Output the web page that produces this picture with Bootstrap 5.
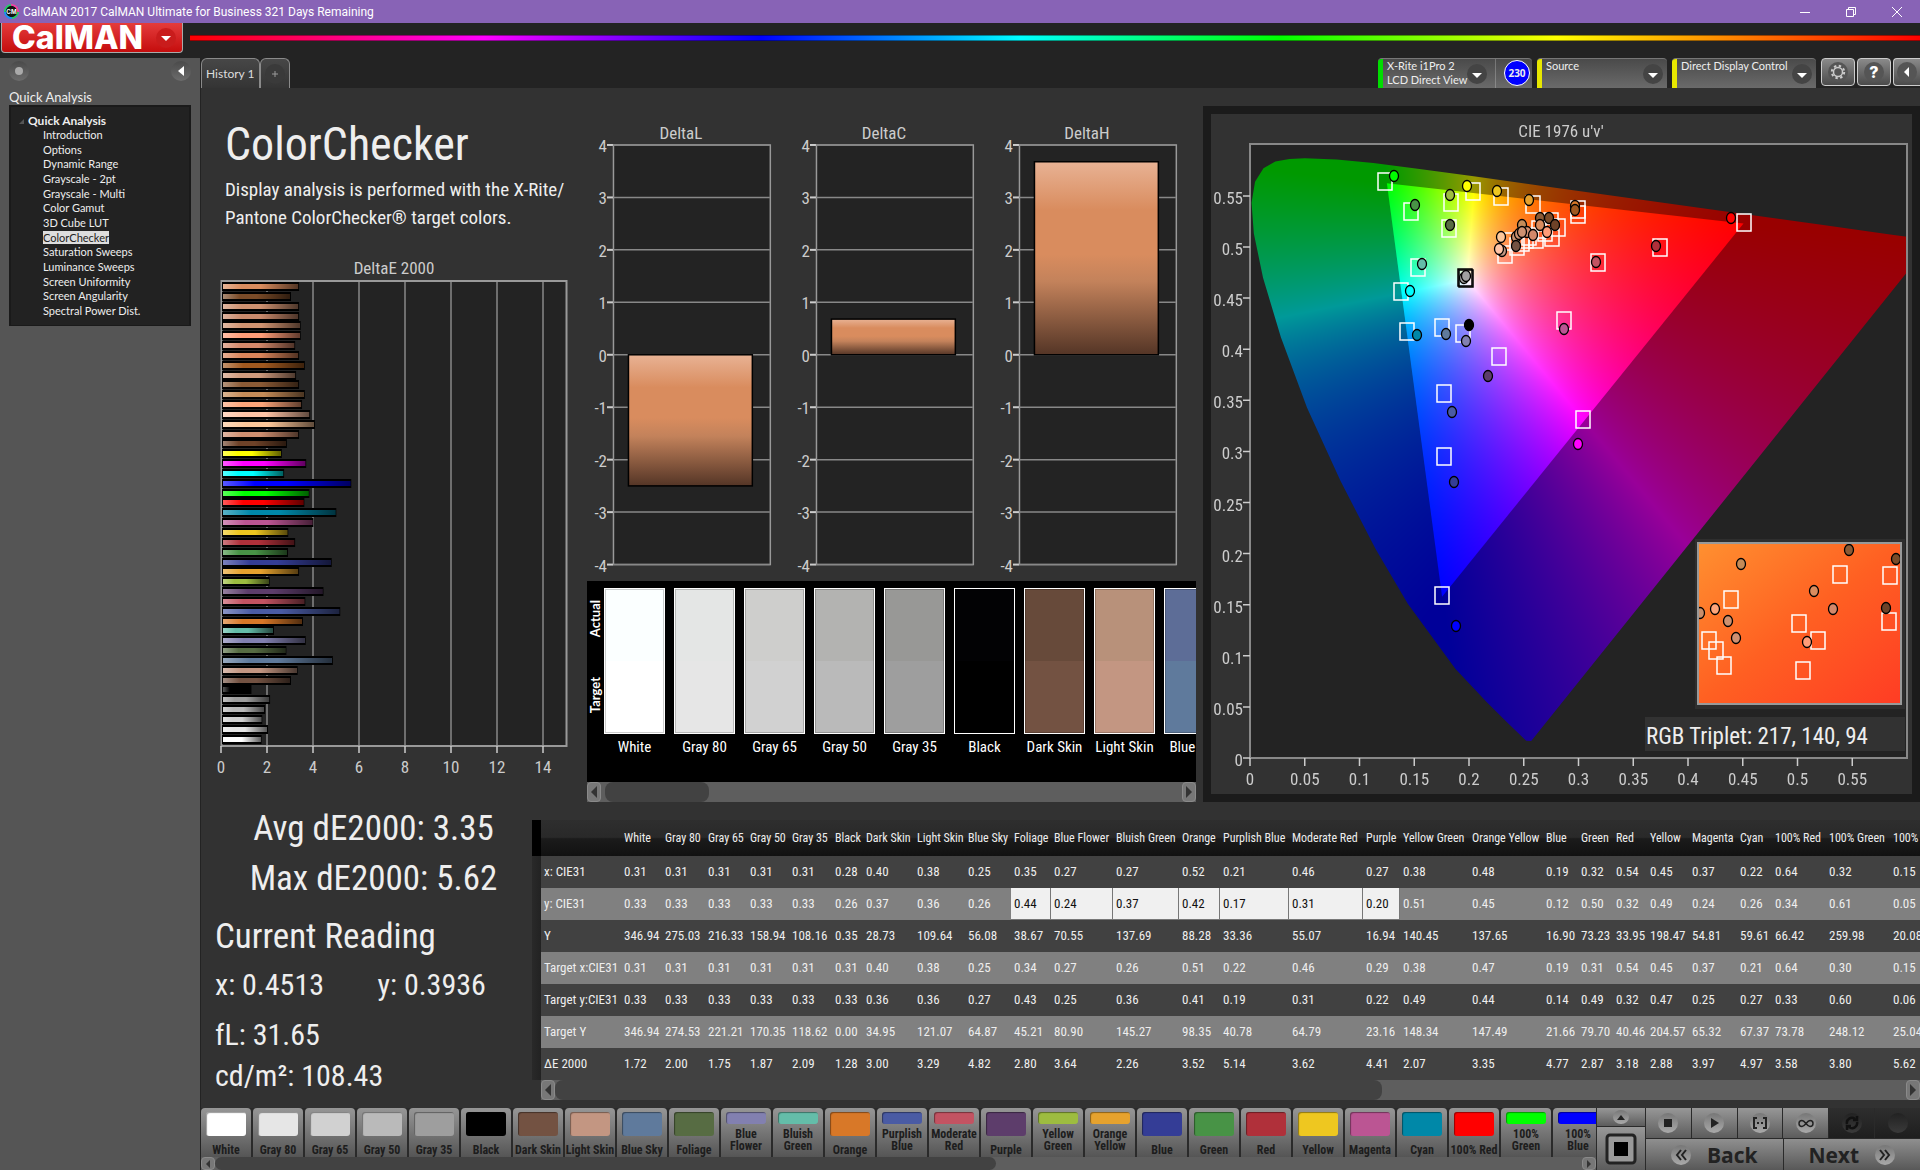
<!DOCTYPE html>
<html lang="en">
<head>
<meta charset="utf-8">
<meta name="viewport" content="width=device-width, initial-scale=1">
<title>CalMAN 2017</title>
<link href="https://cdn.jsdelivr.net/npm/bootstrap@5.3.0/dist/css/bootstrap.min.css" rel="stylesheet">
<style>
:root{--ui:Lato,"Open Sans",sans-serif;--slim:"Roboto Condensed",Lato,sans-serif}
body{background:#323232;color:#eee;font-family:var(--ui);font-size:12px;line-height:14px;overflow:hidden}
button{font-family:inherit;color:inherit;border:0;padding:0;background:none}
.titlebar{height:23px;background:#8863b6;font:12px/20px Roboto,"Open Sans",sans-serif;color:#fff}
.titlebar .win{width:46px;height:20px}
.brandrow{height:35px;background:#232323}
.brand{width:182px;height:30px;background:linear-gradient(#e43c3c,#c50d0d);border:1px solid #aaa;border-top:0;border-radius:0 0 4px 4px;margin-left:1px;padding:0 6px 0 10px}
.brand-name{font:800 32px/28px Inter,Lato,sans-serif;color:#fff}
.spectrum{height:6px;margin-top:12px;margin-left:7px;border:solid #0006;border-width:1px 0;background:linear-gradient(90deg,#f00,#f0f 17%,#00f 33%,#0ff 48%,#0f0 63%,#ff0 79%,#f00)}
.sidebar{width:201px;background:#555;border-right:1px solid #232323;padding:0 9px}
.knobs{padding-top:3px}
.knob{width:20px;height:20px;border-radius:50%;background:linear-gradient(#4a4a4a,#6c6c6c);display:grid;place-items:center}
.knob.dim{background:#3a3a3a}
.side-title{font-size:13px;line-height:16px}
.tree{background:#222;border:2px solid #1a1a1a;border-bottom-width:1px;height:221px;padding-top:7px}
.tree-head{font-size:12px;line-height:14px;font-weight:700}
.tree ul{height:190px}
.tree a{color:#eee;text-decoration:none;font-size:11px;line-height:14px}
.tree a.on{background:#ddd;color:#222}
.tabs{height:30px;background:#232323}
.tabpage{height:30px;background:linear-gradient(#474747,#343434);border:1px solid #8a8a8a;border-bottom:0;color:#ddd;font-size:12px}
.devices{gap:5px}
.device{height:30px;background:linear-gradient(#4a4a4a,#6a6a6a);border-radius:4px 4px 0 0;color:#eee;text-align:left;border-top:1px solid #777;overflow:hidden;font-size:11px}
.device .led{width:5px;background:#e8e800}
.device .led.ok{background:#0d0}
.w-meter{width:154px}.w-source{width:130px}.w-display{width:144px}
.counter{width:26px;height:26px;margin:1px 2px 0 8px;border-radius:50%;background:#00f;border:1px solid #fff;font:700 10px/24px "Open Sans",sans-serif;text-align:center}
.tools{gap:2px}
.tool{width:34px;height:28px;border:1px solid #ccc;border-radius:4px;background:linear-gradient(#8a8a8a,#4a4a4a);display:grid;place-items:center}
.tool.cut{width:27px;border-right:0;border-radius:4px 0 0 4px}
.upper{padding-top:18px}
.col-a,.col-b,.col-c{min-width:0}
.col-a{flex:376 1 0}.col-b{flex:626 1 0}.col-c{flex:717 1 0}
.lead-in{padding:10px 0 0 24px}
.page-title{font-family:var(--slim);font-size:46px;line-height:56px;color:#eee}
.intro{font-family:var(--slim);font-size:19px;line-height:28px;white-space:nowrap}
#de{margin-top:22px}
#deltas{padding-top:11px}
.delta{width:32.4%}
svg text{font-family:var(--slim);font-size:17px;fill:#ccc}
.swatches{margin:4px 7px 0 10px}
.strip{height:201px;background:#000;padding-top:7px}
.sides{width:17px;padding-top:12px;gap:40px}
#chips{gap:9px}
.chip{width:61px;flex:none}
.chip-face{height:146px;border:1px solid #fff;outline:1px solid #0003;outline-offset:-2px}
.chip-name{font-family:var(--slim);font-size:15px;line-height:22px;padding-top:2px;white-space:nowrap;color:#fff}
.updown{writing-mode:vertical-rl;transform:rotate(180deg);font-weight:700;font-size:13px;line-height:16px;color:#fff}
.rail{background:#5e5e5e;height:20px}
.rail.thin{height:13px}
.rail button{width:14px;background:#777;border:1px solid #8a8a8a;border-radius:4px;line-height:0}
.rail .thumb{background:#424242;border-radius:8px}
.t17{width:17%}.t56{width:56%}.t60{width:60%}
.cie{border:8px solid #1b1b1b}
.stats{width:331px;padding:2px 0 0 14px}
.big{font-family:var(--slim);font-size:35px;line-height:50px}
.mid{font-family:var(--slim);font-size:30px;line-height:36px}
.gap-s{margin-top:5px}.gap-l{margin-top:14px}
.results{padding-top:18px}
.results .rail{margin-left:9px}
.grid{table-layout:fixed;border-collapse:collapse;width:1410px;font-family:var(--slim);font-size:13px}
.grid th,.grid td{height:32px;padding:0 0 0 3px;font-weight:400;white-space:nowrap;color:#eee;line-height:20px}
.grid thead th{height:36px;font-size:12px;background:linear-gradient(#2e2e2e,#292929 48%,#1b1b1b 52%,#111)}
.grid tbody tr{background:#414141}
.grid tbody tr:nth-child(even){background:#808080}
.grid .edge{background:linear-gradient(90deg,#292929,#222)}
.grid thead .edge{background:#000}
.grid td.sel{background:#f0f0f0;color:#111;box-shadow:inset -1px -1px #777}
.dock{height:62px;background:#2a2a2a}
#patches{gap:2px}
.patch{width:50px;height:49px;flex:none;border-radius:4px 4px 0 0;background:linear-gradient(#969696,#555);color:#1d1d1d;font:700 12px/12px var(--slim);text-align:center}
.patch i{display:block;width:40px;height:24px;border-radius:3px;box-shadow:inset 1px 1px 1px #0006}
.patch.two i{height:12px}
.side-keys{width:50px;padding:0 1px;gap:1px}
.transport{width:274px;gap:1px}
.transport>div{gap:1px}
.transport .pad{height:30px}
.pad{background:linear-gradient(#979797,#5c5c5c);flex:1 1 0;display:grid;place-items:center}
.pad.k1{flex-grow:18}.pad.k2{flex-grow:43}
.pad.off{background:linear-gradient(#2e2e2e,#1e1e1e)}
.disc{width:20px;height:20px;border-radius:50%;background:linear-gradient(#777,#aaa);display:grid;place-items:center}
.disc.sm{width:16px;height:14px}
.off .disc{background:linear-gradient(#222,#3a3a3a)}
.nav-btn{background:linear-gradient(#8f8f8f,#585858);color:#222;font:700 21px/28px "Open Sans",sans-serif;flex:1 1 0}
</style>
</head>
<body class="d-flex flex-column vh-100">
<header class="titlebar d-flex flex-shrink-0 align-items-center">
  <svg class="ms-1 me-1" width="15" height="17" viewBox="0 0 17 17"><circle cx="8.500" cy="8.500" r="7.500" fill="#111" stroke="#2c6" stroke-width="2"/><path d="M8 1a7.500 7.500 0 0 1 8 8" stroke="#f3a" stroke-width="2" fill="none"/><path d="M1 9a7.500 7.500 0 0 0 8 7" stroke="#28f" stroke-width="2" fill="none"/><text x="8.500" y="11.500" text-anchor="middle" style="font:700 7px Inter,sans-serif;fill:#fff">CM</text></svg>
  <span class="flex-grow-1">CalMAN 2017 CalMAN Ultimate for Business 321 Days Remaining</span>
  <button class="win" aria-label="Minimize"><svg width="12" height="12"><path d="M1 6.500h10" stroke="#fff"/></svg></button>
  <button class="win" aria-label="Restore"><svg width="12" height="12" fill="none" stroke="#fff"><path d="M1.500 3.500h7v7h-7zM3.500 3.500v-2h7v7h-2"/></svg></button>
  <button class="win" aria-label="Close"><svg width="12" height="12"><path d="M1 1l10 10M11 1L1 11" stroke="#fff"/></svg></button>
</header>
<div class="brandrow d-flex flex-shrink-0">
  <button class="brand d-flex align-items-center justify-content-between" aria-label="CalMAN menu"><span class="brand-name">CalMAN</span><svg width="20" height="20"><circle cx="10" cy="10" r="10" fill="#c91c1c"/><path d="M5 8h10l-5 5z" fill="#fff"/></svg></button>
  <div class="spectrum flex-grow-1"></div>
</div>
<div class="d-flex flex-grow-1">
  <aside class="sidebar flex-shrink-0">
    <div class="knobs d-flex justify-content-between mb-2">
      <button class="knob" aria-label="Pin"><svg width="8" height="8"><circle cx="4" cy="4" r="4" fill="#aaa"/></svg></button>
      <button class="knob" aria-label="Collapse"><svg width="8" height="12"><path d="M7 1v10L1 6z" fill="#fff"/></svg></button>
    </div>
    <div class="side-title">Quick Analysis</div>
    <nav class="tree">
      <div class="d-flex align-items-center ps-2"><svg width="5" height="5" class="me-1"><path d="M5 0v5H0z" fill="#555"/></svg><span class="tree-head">Quick Analysis</span></div>
      <ul class="list-unstyled d-flex flex-column justify-content-between ps-4 ms-2 mb-0">
        <li><a href="#">Introduction</a></li><li><a href="#">Options</a></li><li><a href="#">Dynamic Range</a></li><li><a href="#">Grayscale - 2pt</a></li><li><a href="#">Grayscale - Multi</a></li><li><a href="#">Color Gamut</a></li><li><a href="#">3D Cube LUT</a></li><li><a href="#" class="on">ColorChecker</a></li><li><a href="#">Saturation Sweeps</a></li><li><a href="#">Luminance Sweeps</a></li><li><a href="#">Screen Uniformity</a></li><li><a href="#">Screen Angularity</a></li><li><a href="#">Spectral Power Dist.</a></li>
      </ul>
    </nav>
  </aside>
  <main class="flex-grow-1 d-flex flex-column overflow-hidden">
    <div class="tabs d-flex flex-shrink-0">
      <button class="tabpage px-1 rounded-top">History 1</button>
      <button class="tabpage px-1 rounded-top" aria-label="Add history"><span class="knob dim"><svg width="8" height="8"><path d="M4 1v6M1 4h6" stroke="#999"/></svg></span></button>
      <div class="devices ms-auto d-flex">
        <div class="device w-meter d-flex">
          <span class="led ok"></span>
          <button class="d-flex text-start ps-1 flex-grow-1"><span>X-Rite i1Pro 2<br>LCD Direct View</span><svg class="mt-1" width="20" height="22"><ellipse cx="10" cy="11" rx="10" ry="10" fill="#444"/><path d="M5 10h10l-5 5z" fill="#fff"/></svg></button>
          <span class="vr"></span><span class="counter">230</span>
        </div>
        <button class="device w-source d-flex"><span class="led h-100"></span><span class="ps-1">Source</span><svg class="mt-1 me-1 ms-auto" width="20" height="22"><ellipse cx="10" cy="11" rx="10" ry="10" fill="#444"/><path d="M5 10h10l-5 5z" fill="#fff"/></svg></button>
        <button class="device w-display d-flex"><span class="led h-100"></span><span class="ps-1 text-nowrap">Direct Display Control</span><svg class="mt-1 me-1 ms-auto flex-shrink-0" width="20" height="22"><ellipse cx="10" cy="11" rx="10" ry="10" fill="#444"/><path d="M5 10h10l-5 5z" fill="#fff"/></svg></button>
        <div class="tools d-flex">
        <button class="tool" aria-label="Settings"><svg width="22" height="22"><circle cx="11" cy="11" r="10" fill="#555"/><circle cx="11" cy="11" r="4.500" fill="none" stroke="#ccc" stroke-width="1.500"/><circle cx="11" cy="11" r="6.200" fill="none" stroke="#ccc" stroke-width="2" stroke-dasharray="2.400 2.470"/></svg></button>
        <button class="tool" aria-label="Help"><svg width="22" height="22"><circle cx="11" cy="11" r="10" fill="#555"/><text x="11" y="17" text-anchor="middle" style="font:800 16px Inter;fill:#fff">?</text></svg></button>
        <button class="tool cut" aria-label="Hide"><svg width="22" height="22"><circle cx="11" cy="11" r="10" fill="#555"/><path d="M13 6v10l-5-5z" fill="#fff"/></svg></button>
        </div>
      </div>
    </div>
    <section class="upper d-flex flex-shrink-0">
      <div class="col-a">
        <div class="lead-in">
          <h1 class="page-title fw-normal m-0 mb-1">ColorChecker</h1>
          <p class="intro m-0">Display analysis is performed with the X-Rite/<br>Pantone ColorChecker® target colors.</p>
        </div>
        <svg id="de" class="d-block w-100" viewBox="0 0 376 530"></svg>
      </div>
      <div class="col-b">
        <div class="d-flex" id="deltas"></div>
        <div class="swatches">
          <div class="strip d-flex overflow-hidden">
            <div class="sides d-flex flex-column flex-shrink-0"><span class="updown">Actual</span><span class="updown">Target</span></div>
            <div class="d-flex overflow-hidden" id="chips"></div>
          </div>
          <div class="rail d-flex"><button aria-label="Scroll left"><svg width="8" height="12"><path d="M7 0v12L1 6z" fill="#333"/></svg></button><div class="thumb t17 ms-1 flex-shrink-0"></div><button class="ms-auto" aria-label="Scroll right"><svg width="8" height="12"><path d="M1 0v12l6-6z" fill="#333"/></svg></button></div>
        </div>
      </div>
      <div class="col-c">
        <div class="cie position-relative">
          <canvas id="gamut" class="d-block w-100" width="701" height="680"></canvas>
          <svg id="uv" class="position-absolute top-0 start-0 w-100 h-100" viewBox="0 0 701 680"></svg>
        </div>
      </div>
    </section>
    <section class="d-flex flex-grow-1">
      <div class="stats flex-shrink-0">
        <div class="big text-center">Avg dE2000: 3.35<br>Max dE2000: 5.62</div>
        <div class="big mt-2">Current Reading</div>
        <div class="mid d-flex gap-s"><span class="w-50">x: 0.4513</span><span class="ps-1">y: 0.3936</span></div>
        <div class="mid gap-l">fL: 31.65</div>
        <div class="mid gap-s">cd/m²: 108.43</div>
      </div>
      <div class="results flex-grow-1 overflow-hidden">
        <div class="overflow-hidden"><table class="grid" id="grid"></table></div>
        <div class="rail d-flex"><button aria-label="Scroll left"><svg width="8" height="12"><path d="M7 0v12L1 6z" fill="#333"/></svg></button><div class="thumb t60 flex-shrink-0"></div><button class="ms-auto" aria-label="Scroll right"><svg width="8" height="12"><path d="M1 0v12l6-6z" fill="#333"/></svg></button></div>
      </div>
    </section>
    <footer class="dock d-flex flex-shrink-0">
      <div class="flex-grow-1 overflow-hidden">
        <div class="d-flex overflow-hidden" id="patches"></div>
        <div class="rail thin d-flex"><button aria-label="Scroll left"><svg width="6" height="8"><path d="M5 0v8L1 4z" fill="#333"/></svg></button><div class="thumb t56 flex-shrink-0"></div><button class="ms-auto" aria-label="Scroll right"><svg width="6" height="8"><path d="M1 0v8l4-4z" fill="#333"/></svg></button></div>
      </div>
      <div class="side-keys d-flex flex-column flex-shrink-0">
        <button class="pad k1" aria-label="Up"><span class="disc sm"><svg width="8" height="5"><path d="M0 5l4-5 4 5z" fill="#222"/></svg></span></button>
        <button class="pad k2" aria-label="Pattern window"><svg width="32" height="32"><rect x="2" y="2" width="28" height="28" rx="3" fill="#999" stroke="#222" stroke-width="3"/><path d="M9 9h14v14H9z" fill="#000"/></svg></button>
      </div>
      <div class="transport d-flex flex-column flex-shrink-0">
        <div class="d-flex">
          <button class="pad" aria-label="Stop"><span class="disc"><svg width="8" height="8"><path d="M0 0h8v8H0z" fill="#222"/></svg></span></button>
          <button class="pad" aria-label="Play"><span class="disc"><svg width="9" height="10"><path d="M1 0v10l8-5z" fill="#222"/></svg></span></button>
          <button class="pad" aria-label="Read series"><span class="disc"><svg width="14" height="12" fill="none" stroke="#222" stroke-width="2"><path d="M4 1H1v10h3M10 1h3v10h-3"/><path d="M4 6h6" stroke-dasharray="2 2"/></svg></span></button>
          <button class="pad" aria-label="Continuous"><span class="disc"><svg width="16" height="9" fill="none" stroke="#222" stroke-width="1.500"><path d="M8 4.500C6 2 5 1.500 4 1.500a3 3 0 0 0 0 6c1 0 2-.5 4-3s3-3 4-3a3 3 0 0 1 0 6c-1 0-2-.5-4-3z"/></svg></span></button>
          <button class="pad off" aria-label="Refresh"><span class="disc"><svg width="14" height="14" fill="none" stroke="#111" stroke-width="2.500"><path d="M2 8a5 5 0 0 1 8-5M12 6a5 5 0 0 1-8 5M8 4h4V0M6 10H2v4"/></svg></span></button>
          <button class="pad off" aria-label="Record"><span class="disc"></span></button>
        </div>
        <div class="d-flex flex-grow-1">
          <button class="nav-btn d-flex align-items-center justify-content-center gap-3"><span class="disc"><svg width="12" height="12" fill="none" stroke="#222" stroke-width="2"><path d="M6 1L2 6l4 5M11 1L7 6l4 5"/></svg></span>Back</button>
          <button class="nav-btn d-flex align-items-center justify-content-center gap-3">Next<span class="disc"><svg width="12" height="12" fill="none" stroke="#222" stroke-width="2"><path d="M1 1l4 5-4 5M6 1l4 5-4 5"/></svg></span></button>
        </div>
      </div>
    </footer>
  </main>
</div>
<script src="https://cdn.jsdelivr.net/npm/bootstrap@5.3.0/dist/js/bootstrap.bundle.min.js"></script>
<script>
// name, patch colour, x, y, Y, target x, target y, target Y, dE2000, column width
const P=[
['White','#ffffff','0.31','0.33','346.94','0.31','0.33','346.94','1.72',41],
['Gray 80','#e6e6e6','0.31','0.33','275.03','0.31','0.33','274.53','2.00',43],
['Gray 65','#d1d1d1','0.31','0.33','216.33','0.31','0.33','221.21','1.75',42],
['Gray 50','#bababa','0.31','0.33','158.94','0.31','0.33','170.35','1.87',42],
['Gray 35','#9e9e9e','0.31','0.33','108.16','0.31','0.33','118.62','2.09',43],
['Black','#000000','0.28','0.26','0.35','0.31','0.33','0.00','1.28',31],
['Dark Skin','#735242','0.40','0.37','28.73','0.40','0.36','34.95','3.00',51],
['Light Skin','#c39682','0.38','0.36','109.64','0.38','0.36','121.07','3.29',51],
['Blue Sky','#5f7a9c','0.25','0.26','56.08','0.25','0.27','64.87','4.82',46],
['Foliage','#576c43','0.35','0.44','38.67','0.34','0.43','45.21','2.80',40],
['Blue Flower','#8280b0','0.27','0.24','70.55','0.27','0.25','80.90','3.64',62],
['Bluish Green','#64bda9','0.27','0.37','137.69','0.26','0.36','145.27','2.26',66],
['Orange','#d87828','0.52','0.42','88.28','0.51','0.41','98.35','3.52',41],
['Purplish Blue','#4a5ba4','0.21','0.17','33.36','0.22','0.19','40.78','5.14',69],
['Moderate Red','#c35362','0.46','0.31','55.07','0.46','0.31','64.79','3.62',74],
['Purple','#5d3d6b','0.27','0.20','16.94','0.29','0.22','23.16','4.41',37],
['Yellow Green','#9dbc40','0.38','0.51','140.45','0.38','0.49','148.34','2.07',69],
['Orange Yellow','#e6a22e','0.48','0.45','137.65','0.47','0.44','147.49','3.35',74],
['Blue','#343d96','0.19','0.12','16.90','0.19','0.14','21.66','4.77',35],
['Green','#489346','0.32','0.50','73.23','0.31','0.49','79.70','2.87',35],
['Red','#b0303a','0.54','0.32','33.95','0.54','0.32','40.46','3.18',34],
['Yellow','#eec720','0.45','0.49','198.47','0.45','0.47','204.57','2.88',42],
['Magenta','#bb5593','0.37','0.24','54.81','0.37','0.25','65.32','3.97',48],
['Cyan','#0088a8','0.22','0.26','59.61','0.21','0.27','67.37','4.97',35],
['100% Red','#ff0000','0.64','0.34','66.42','0.64','0.33','73.78','3.58',54],
['100% Green','#00ff00','0.32','0.61','259.98','0.30','0.60','248.12','3.80',64],
['100% Blue','#0000ff','0.15','0.05','20.08','0.15','0.06','25.04','5.62',60]];

// --- results table
const rows=['x: CIE31','y: CIE31','Y','Target x:CIE31','Target y:CIE31','Target Y','ΔE 2000'];
grid.innerHTML='<colgroup><col style="width:9px"><col style="width:80px">'+P.map(p=>`<col style="width:${p[9]}px">`).join('')+'</colgroup>'+
 '<thead><tr><th class="edge"></th><th></th>'+P.map(p=>`<th scope="col">${p[0]}</th>`).join('')+'</tr></thead><tbody>'+
 rows.map((r,i)=>`<tr><td class="edge"></td><th scope="row">${r}</th>`+P.map((p,j)=>`<td${i==1&&j>8&&j<16?' class="sel"':''}>${p[i+2]}</td>`).join('')+'</tr>').join('')+'</tbody>';

// --- actual / target chips
const actual=['#fbffff','#e4e6e5','#cececc','#b3b3b1','#989896','#020204','#674a3a','#b8917a','#5d6d97'];
chips.innerHTML=actual.map((a,i)=>`<div class="chip"><div class="chip-face" style="background:linear-gradient(${a} 50%,${P[i][1]} 50%)"></div><div class="chip-name text-center">${P[i][0]}</div></div>`).join('');

// --- patch buttons
const wrap=['Blue Flower','Bluish Green','Purplish Blue','Moderate Red','Yellow Green','Orange Yellow','100% Green','100% Blue'];
patches.innerHTML=P.map(p=>{const t=wrap.includes(p[0]);return `<button class="patch d-flex flex-column align-items-center pt-1${t?' two':''}"><i style="background:${p[1]}"></i><span class="${t?'mt-1':'mt-2'}">${t?p[0].replace(' ','<br>'):p[0]}</span></button>`}).join('');

// --- dE2000 bars, top to bottom
const skin=[['#d98c5e',3.35],['#7a4b28',3],['#cd9170',3.35],['#c98a6c',3.35],['#cf9270',3.42],['#ff9c78',3.42],['#d4886a',3.18],['#d9845a',3.35],['#a0581f',3.6],['#d09a7c',3.22],['#8b5a35',3.35],['#c48b58',3.6],['#fda57a',3.48],['#ffc4a6',3.83],['#fdc79a',4.04],['#cf8f70',3.35],['#6e4228',2.82],['#ffff00',2.6],['#ff00ff',3.66],['#00ffff',2.7]];
const bars=skin.concat(P.map(p=>[p[1],+p[8]]).reverse());
let s='<defs><linearGradient id="shade"><stop offset="0" stop-color="#fff" stop-opacity=".35"/><stop offset=".25" stop-color="#fff" stop-opacity="0"/><stop offset=".5" stop-color="#000" stop-opacity="0"/><stop offset="1" stop-color="#000" stop-opacity=".62"/></linearGradient></defs><text x="193" y="20" text-anchor="middle">DeltaE 2000</text><rect x="20.500" y="27" width="345" height="465" fill="#232323" stroke="#999" stroke-width="2"/>';
for(let v=0;v<15;v+=2){const x=20+v*23;if(v)s+=`<path d="M${x} 28V491" stroke="#888" stroke-width="1.500"/>`;s+=`<path d="M${x} 492v7" stroke="#ccc" stroke-width="1.500"/><text x="${x}" y="519" text-anchor="middle">${v}</text>`}
bars.forEach((b,i)=>{const y=Math.round(29+i*9.84),w=b[1]*23;s+=`<rect x="21" y="${y-1}" width="${w}" height="9" fill="#000"/><rect x="22" y="${y+1}" width="${w-2}" height="5" fill="${b[0]}"/><rect x="22" y="${y+1}" width="${w-2}" height="5" fill="url(#shade)"/>`});
de.innerHTML=s;

// --- DeltaL / DeltaC / DeltaH
deltas.innerHTML=[['DeltaL',-2.5],['DeltaC',.68],['DeltaH',3.68]].map(([n,val])=>{
 let g=`<svg class="delta d-block" viewBox="0 0 203 460"><defs><linearGradient id="copper" x2="0" y2="1"><stop offset="0" stop-color="#e8b294"/><stop offset=".25" stop-color="#d98c5e"/><stop offset=".48" stop-color="#d98c5e"/><stop offset=".62" stop-color="#c3825b"/><stop offset="1" stop-color="#543526"/></linearGradient></defs><text x="104" y="22" text-anchor="middle">${n}</text><rect x="36.500" y="28" width="157" height="420" fill="#232323" stroke="#999" stroke-width="1.500"/>`;
 for(let v=4;v>=-4;v--){const y=238-v*52.5;g+=`<path d="M36 ${y}h157" stroke="#888" stroke-width="1.500"/><path d="M30 ${y}h6" stroke="#ccc" stroke-width="2"/><text x="30" y="${y+7}" text-anchor="end">${v}</text>`}
 const t=238-Math.max(val,0)*52.5;
 return g+`<rect x="51.500" y="${t}" width="124" height="${Math.abs(val)*52.5}" fill="url(#copper)" stroke="#000" stroke-width="1.500"/></svg>`}).join('');

// --- CIE 1976 diagram
const X=u=>39+u*1095, Y=v=>644-v*1022;
const locus=[[.2568,.0166],[.2522,.0169],[.2347,.035],[.2161,.0549],[.1877,.0871],[.1441,.151],[.1147,.2044],[.0828,.2708],[.0521,.3427],[.0282,.4117],[.0119,.4698],[.0035,.5131],[.0014,.5432],[.0046,.5638],[.0123,.577],[.0231,.5837],[.036,.5861],[.0501,.5868],[.0792,.5856],[.1127,.5821],[.1531,.5766],[.2026,.5694],[.2623,.5604],[.3315,.5501],[.4035,.5393],[.4692,.5296],[.5203,.5219],[.583,.5125],[.6234,.5065]];
const tri=[[.125,.5625],[.4507,.5229],[.1754,.1579]];
const cv=gamut.getContext('2d');
cv.fillStyle='#323232';cv.fillRect(0,0,701,680);
cv.fillStyle='#232323';cv.fillRect(39,30,657,614);
function field(k){
 const c=document.createElement('canvas');c.width=701;c.height=680;const x=c.getContext('2d'),im=x.createImageData(701,680);
 for(let j=0;j<680;j++)for(let i=0;i<701;i++){
  const u=(i-39)/1095,v=Math.max((644-j)/1022,.001),Xc=9*u/(4*v),Z=(12-3*u-20*v)/(4*v);
  let c3=[3.2406*Xc-1.5372-.4986*Z,-.9689*Xc+1.8758+.0415*Z,.0557*Xc-.204+1.057*Z].map(q=>Math.max(q,0));
  const m=Math.max(...c3)||1,o=(j*701+i)*4;
  c3.forEach((q,n)=>im.data[o+n]=255*k*q/m);im.data[o+3]=255}
 x.putImageData(im,0,0);return c}
function fillIn(pts,k){cv.save();cv.beginPath();cv.rect(39,30,657,614);cv.clip();cv.beginPath();pts.forEach(p=>cv.lineTo(X(p[0]),Y(p[1])));cv.closePath();cv.clip();cv.drawImage(field(k),0,0);cv.restore()}
fillIn(locus,.6);fillIn(tri,1);
let d='<text x="350" y="23" text-anchor="middle">CIE 1976 u\'v\'</text><rect x="39" y="30" width="657" height="614" fill="none" stroke="#888" stroke-width="2"/>';
for(let i=0;i<12;i++){const v=+(i*.05).toFixed(2);d+=`<path d="M32 ${Y(v)}h7M${X(v)} 644v8" stroke="#ccc" stroke-width="1.500"/><text x="32" y="${Y(v)+8}" text-anchor="end">${v}</text><text x="${X(v)}" y="671" text-anchor="middle">${v}</text>`}
const sq=(x,y,c='#fff')=>`<rect x="${x-7}" y="${y-8}" width="14" height="17" fill="none" stroke="${c}" stroke-width="1.500"/>`;
const dot=(x,y,c)=>`<ellipse cx="${x}" cy="${y}" rx="4.500" ry="5.500" fill="${c}" stroke="#000" stroke-width="1.300"/>`;
d+=[[174,67],[200,97],[240,88],[238,114],[262,77],[290,82],[322,90],[367,95],[367,100],[533,108],[449,133],[387,148],[207,153],[190,177],[196,217],[231,213],[252,219],[353,206],[288,242],[233,279],[372,305],[233,342],[231,481],[340,107],[347,113],[341,123],[325,125],[328,115],[294,140],[296,127],[306,132],[311,128],[315,125],[318,122],[334,118]].map(p=>sq(...p)).join('')+sq(254,163,'#000')+sq(255,164,'#000');
d+=[[183,62,'#0f0'],[204,91,'#489346'],[239,81,'#9dbc40'],[239,111,'#576c43'],[256,72,'#ff0'],[286,77,'#eec720'],[318,86,'#e6a22e'],[364,92,'#d87828'],[364,96,'#a0581f'],[520,104,'#f00'],[445,132,'#b0303a'],[385,148,'#c35362'],[211,150,'#64bda9'],[199,177,'#0ff'],[206,221,'#0088a8'],[235,220,'#5f7a9c'],[255,227,'#8280b0'],[258,211,'#000'],[353,215,'#bb5593'],[277,262,'#5d3d6b'],[241,298,'#4a5ba4'],[367,330,'#f0f'],[243,368,'#343d96'],[245,512,'#00f'],[253,164,'#aaa'],[255,162,'#a0a0a0'],[329,104,'#8b5a35'],[338,104,'#7a4b28'],[344,111,'#6e4228'],[311,111,'#c48b58'],[329,111,'#d98c5e'],[336,118,'#ff9c78'],[316,118,'#cf8f70'],[305,123,'#c98f6c'],[308,120,'#cd9170'],[311,118,'#cd9170'],[322,121,'#d4886a'],[305,132,'#735242'],[290,123,'#fdc79a'],[291,137,'#c39682'],[288,135,'#ffc4a6']].map(p=>dot(...p)).join('');
// magnified inset and readout
d+='<defs><linearGradient id="warm" x1="0" y1="0" x2="1" y2="1"><stop offset="0" stop-color="#ff9030"/><stop offset=".5" stop-color="#ff6022"/><stop offset="1" stop-color="#ff3c24"/></linearGradient><clipPath id="cut"><rect x="487" y="430" width="203" height="160"/></clipPath></defs><rect x="484" y="425" width="210" height="170" fill="#2e2e2e"/><rect x="487" y="429" width="203" height="161" fill="url(#warm)"/><g clip-path="url(#cut)">';
const zx=x=>x/2.178-11,zy=y=>y/3+386;
d+=[[1157,298],[1393,222],[1503,226],[1501,364],[1304,369],[1347,420],[1314,511],[1109,420],[1124,451],[1142,496]].map(p=>sq(Math.round(zx(p[0])),Math.round(zy(p[1])))).join('');
d+=[[1179,192,'#c48b58'],[1414,150,'#8b5a35'],[1516,177,'#7a4b28'],[1338,273,'#d98c5e'],[1121,328,'#fda57a'],[1088,339,'#c98f6c'],[1149,362,'#cd9170'],[1167,413,'#cf8f70'],[1378,328,'#d4886a'],[1494,324,'#6e4228'],[1323,425,'#ff9c78']].map(p=>dot(Math.round(zx(p[0])),Math.round(zy(p[1])),p[2])).join('');
d+='</g><rect x="487" y="429" width="203" height="161" fill="none" stroke="#999" stroke-width="2"/><rect x="434" y="603" width="260" height="34" fill="#323232"/><text x="435" y="630" style="font-size:23px;fill:#eee">RGB Triplet: 217, 140, 94</text>';
uv.innerHTML=d;
</script>
</body>
</html>
